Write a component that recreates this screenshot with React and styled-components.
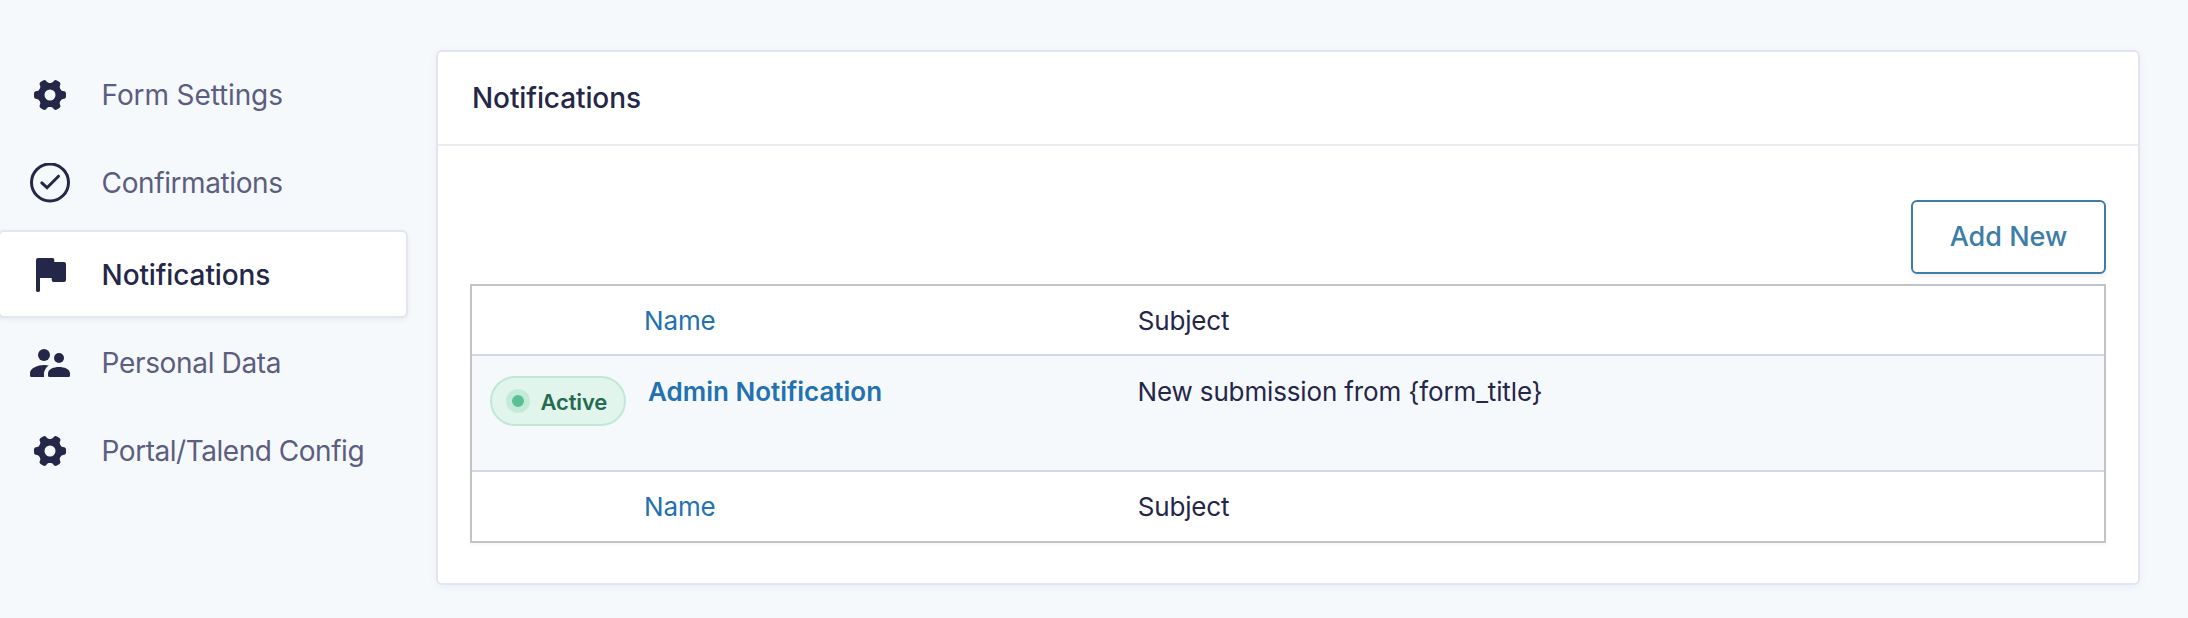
import React from "react";
import styled, { createGlobalStyle } from "styled-components";

const GlobalStyle = createGlobalStyle`
  *, *::before, *::after { box-sizing: border-box; }
  body {
    margin: 0;
    background: #f6f9fc;
    color: #242748;
    font-family: Inter, "Liberation Sans", sans-serif;
    overflow: hidden;
  }
`;

const Page = styled.div`
  display: flex;
  align-items: flex-start;
  height: 618px;
  width: 2188px;
`;

const Sidebar = styled.nav`
  display: flex;
  flex-direction: column;
  width: 408px;
  margin-right: 28px;
  padding-top: 51px;
`;

const NavItem = styled.a`
  display: flex;
  align-items: center;
  height: 88px;
  padding-left: 30px;
  gap: 31.6px;
  color: ${(p) => (p.$active ? "#242748" : "#5b5e80")};
  font-size: 28px;
  font-weight: ${(p) => (p.$active ? 500 : 400)};
  letter-spacing: ${(p) => p.$tracking || 0}px;
  white-space: nowrap;
  ${(p) =>
    p.$active &&
    `
    margin: 3px 0 1px -2px;
    padding-top: 2px;
    background: #fff;
    border: 2px solid #e3e5ef;
    border-radius: 6px;
    box-shadow: 0 2px 5px rgba(36, 39, 72, 0.07);
  `}
`;

const Icon = styled.svg`
  flex: none;
  width: 40px;
  height: 40px;
  fill: #242748;
`;

const Card = styled.section`
  width: 1704px;
  height: 535px;
  margin-top: 50px;
  background: #fff;
  border: 2px solid #e2e5f0;
  border-radius: 6px;
  box-shadow: 0 2px 8px rgba(36, 39, 120, 0.06);
`;

const CardHeader = styled.header`
  height: 94px;
  padding-left: 34px;
  border-bottom: 2px solid #ebebf2;
`;

const CardTitle = styled.h2`
  margin: 0;
  font-size: 28px;
  font-weight: 500;
  line-height: 93px;
  letter-spacing: -0.1px;
`;

const CardBody = styled.div`
  display: flex;
  flex-direction: column;
  padding: 54px 32px 0;
`;

const AddButton = styled.button`
  align-self: flex-end;
  width: 195px;
  height: 74px;
  padding: 0 0 1px;
  background: #fff;
  border: 2px solid #3e7da6;
  border-radius: 6px;
  box-shadow: 0 4px 4px rgba(0, 0, 0, 0.05);
  color: #3e7da6;
  font: 500 27px Inter, "Liberation Sans", sans-serif;
`;

const Table = styled.div`
  margin-top: 10px;
  border: 2px solid #c3c4c7;
  box-shadow: 0 2px 2px rgba(0, 0, 0, 0.04);
  font-size: 26px;
`;

const Row = styled.div`
  display: grid;
  grid-template-columns: 171px 494px 1fr;
`;

const LabelRow = styled(Row)`
  height: ${(p) => p.$height}px;
  line-height: 69px;
`;

const DataRow = styled(Row)`
  height: 118px;
  padding-top: 20px;
  background: #f6f9fc;
  border: solid #d5d7e9;
  border-width: 2px 0;
  line-height: 31px;
`;

const SortLink = styled.a`
  padding-left: 1px;
  color: #2271b1;
  letter-spacing: -0.15px;
`;

const Subject = styled.span`
  padding-left: ${(p) => p.$inset || 0}px;
  letter-spacing: ${(p) => p.$tracking}px;
`;

const RowTitle = styled.a`
  padding-left: 5px;
  color: #2271b1;
  font-weight: 600;
`;

const Badge = styled.span`
  display: flex;
  align-items: center;
  gap: 10.5px;
  width: 136px;
  height: 50px;
  margin-left: 18px;
  padding-left: 14px;
  background: #e1f5ec;
  border: 2px solid #bfe9d6;
  border-radius: 25px;
  color: #276a52;
  font-size: 22px;
  font-weight: 600;
  letter-spacing: -0.15px;
`;

const Dot = styled.i`
  width: 24px;
  height: 24px;
  background: #5abf92;
  border: 6px solid #c4ebd9;
  border-radius: 50%;
`;

const BadgeText = styled.span`
  padding-top: 2px;
`;

const TOOTH =
  "M8-7.5L10.4-5.6Q11.8-3.9 13-3.9Q16-3.9 16-1.2V1.2Q16 3.9 13 3.9Q11.8 3.9 10.4 5.6L8 7.5Z";

const Gear = () => (
  <Icon viewBox="-20 -20 40 40">
    <circle r="8.7" fill="none" stroke="#242748" strokeWidth="6.4" />
    {[0, 60, 120, 180, 240, 300].map((angle) => (
      <path key={angle} transform={`rotate(${angle})`} d={TOOTH} />
    ))}
  </Icon>
);

const CheckCircle = () => (
  <Icon viewBox="0 1 40 40">
    <g fill="none" stroke="#242748" strokeWidth="3">
      <circle cx="20" cy="20.4" r="18.5" />
      <path d="M11.8 20.9L17 25.7L28.5 14.2" strokeLinecap="round" />
    </g>
  </Icon>
);

const Flag = () => (
  <Icon viewBox="0 0 40 40">
    <path d="M8 3H22.5Q24.3 3 24.3 5V7H34Q36 7 36 9V25Q36 27 34 27H23.5Q21.7 27 21.7 25V23H10V35.5Q10 37 8 37Q6 37 6 35.5V5Q6 3 8 3Z" />
  </Icon>
);

const People = () => (
  <Icon viewBox="0 0 40 40">
    <circle cx="14" cy="12" r="6" />
    <circle cx="29" cy="15" r="5" />
    <path d="M1.5 34Q0 34 0 32.5V30C0 25 8 22 14 22Q16.5 22 18.7 22.5Q14 26 14 31V34Z" />
    <path d="M19.5 34Q18 34 18 32.5V30.5C18 26 24 24 29 24S40 26 40 30.5V32.5Q40 34 38.5 34Z" />
  </Icon>
);

const NAV = [
  { label: "Form Settings", icon: Gear, tracking: -0.12 },
  { label: "Confirmations", icon: CheckCircle, tracking: -0.4 },
  { label: "Notifications", icon: Flag, tracking: -0.12, active: true },
  { label: "Personal Data", icon: People, tracking: -0.34 },
  { label: "Portal/Talend Config", icon: Gear, tracking: -0.47 },
];

const Labels = ({ height }) => (
  <LabelRow $height={height}>
    <span />
    <SortLink>Name</SortLink>
    <Subject $tracking={-0.15} $inset={0.7}>Subject</Subject>
  </LabelRow>
);

export default function App() {
  return (
    <>
      <GlobalStyle />
      <Page>
        <Sidebar>
          {NAV.map(({ label, icon: Glyph, tracking, active }) => (
            <NavItem key={label} $active={active} $tracking={tracking}>
              <Glyph />
              <span>{label}</span>
            </NavItem>
          ))}
        </Sidebar>
        <Card>
          <CardHeader>
            <CardTitle>Notifications</CardTitle>
          </CardHeader>
          <CardBody>
            <AddButton>Add New</AddButton>
            <Table>
              <Labels height={68} />
              <DataRow>
                <Badge>
                  <Dot />
                  <BadgeText>Active</BadgeText>
                </Badge>
                <RowTitle>Admin Notification</RowTitle>
                <Subject $tracking={-0.14} $inset={0.5}>New submission from {"{form_title}"}</Subject>
              </DataRow>
              <Labels height={69} />
            </Table>
          </CardBody>
        </Card>
      </Page>
    </>
  );
}
